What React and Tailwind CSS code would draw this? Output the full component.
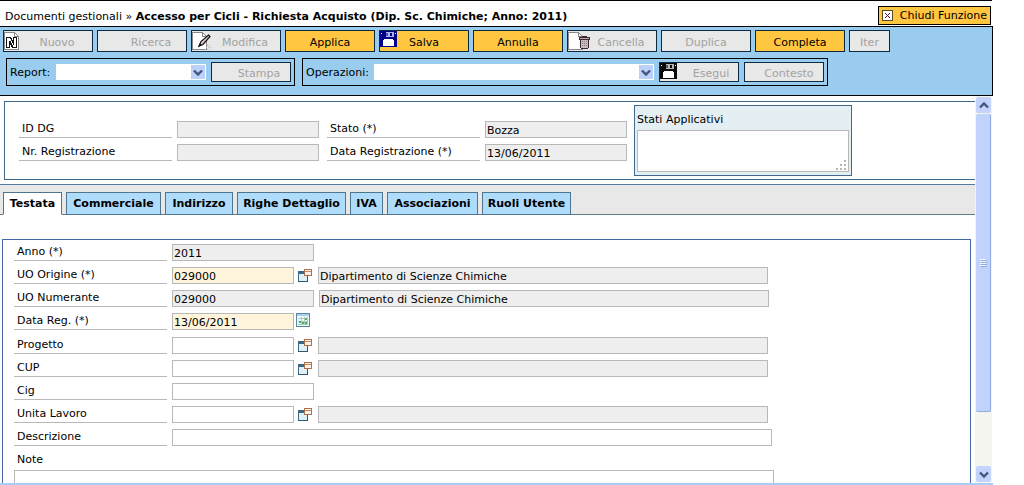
import React from "react";
import clsx from "clsx";

const PageIcon = ({ children }) => (
  <svg className="h-[20px] w-[23px]" viewBox="0 0 23 20" shapeRendering="crispEdges">
    <path d="M0.5 1.5h10l4 4v13h-14z" fill="#fff" stroke="#8a8a8a" />
    <path d="M10.5 1.5v4h4" fill="none" stroke="#8a8a8a" />
    {children}
  </svg>
);

const NewIcon = () => (
  <PageIcon>
    <path d="M2 6h5l2 4V6h4v11H8l-2-4v4H2z" fill="#111" />
    <path d="M3 7h3v1h1v2h1v2h1v2h1V7h2v9H9v-2H8v-2H7v-2H5v6H3z" fill="#fff" />
  </PageIcon>
);

const EditIcon = () => (
  <PageIcon>
    <g shapeRendering="auto">
      <path d="M7 15l2-4.500L16.500 4l1.500 1.500-7 8z" fill="#e0c8c8" stroke="#111" strokeWidth="1.200" />
      <path d="M6 16.500l2-4 2 1.500z" fill="#111" />
      <path d="M14 16.500h6M15 14.500h4M13 18.500h6" stroke="#bbb" strokeDasharray="1 1" />
    </g>
  </PageIcon>
);

const TrashIcon = () => (
  <PageIcon>
    <path d="M14.500 6.500v-1h4v1" fill="none" stroke="#3a2a30" />
    <path d="M11.500 6.500h10v2h-10z" fill="#c9a9b1" stroke="#3a2a30" />
    <path d="M12.500 8.500h8v8l-1 1h-6l-1-1z" fill="#c9bcc2" stroke="#3a2a30" />
    <path d="M14.500 10v6M16.500 10v6M18.500 10v6" stroke="#8b7a80" strokeDasharray="1 1" />
  </PageIcon>
);

const FloppyIcon = ({ body = "#00008b", light = "#a9b4ee" }) => (
  <svg className="h-[17px] w-[17px]" viewBox="0 0 17 17" shapeRendering="crispEdges">
    <path d="M0 0h16l1 1v15h-17z" fill={body} />
    <path d="M1 2h1v1h-1zM15 2h1v1h-1z" fill="#fff" />
    <path d="M6 1h8v5h-8z" fill={light} />
    <path d="M5 2h3v3h-3z" fill={body} opacity="0.5" />
    <path d="M10 2h2v3h-2z" fill={body} />
    <path d="M3 9h11v6h-11z" fill="#fff" />
    <path d="M4 8h9v1h-9z" fill="#fff" />
  </svg>
);

const BlackFloppyIcon = () => <FloppyIcon body="#0a0a0a" light="#b5b5b5" />;

const LookupIcon = () => (
  <svg className="h-[14px] w-[14px]" viewBox="0 0 14 14" shapeRendering="crispEdges">
    <path d="M0.500 2.500h9v10h-9z" fill="#dff0f7" stroke="#3c6884" />
    <path d="M0 2h10v3h-10z" fill="#3c6884" />
    <path d="M9 4h1v9h-1zM0 12h10v1h-10z" fill="#2f566f" />
    <path d="M6.500 0.500h7v6h-7z" fill="#fdf3ea" stroke="#b0714a" />
    <path d="M7 2h6v1h-6z" fill="#c98a5f" />
  </svg>
);

const CalendarIcon = () => (
  <svg className="h-[14px] w-[14px]" viewBox="0 0 14 14" shapeRendering="crispEdges">
    <path d="M0.500 0.500h13v13h-13z" fill="#eef7fb" stroke="#5b87a3" />
    <path d="M1 1h12v2h-12z" fill="#a9d0e6" />
    <path d="M2 5h10M2 8h10M2 11h10M5 4v8M8 4v8M11 4v8" stroke="#a5d0b4" strokeWidth="1" fill="none" />
    <path d="M9 5h2v2h-2zM3 8h2v2h-2zM6 9h2v2h-2zM9 9h2v2h-2z" fill="#5fa873" />
  </svg>
);

const Chevron = ({ up }) => (
  <svg className="h-[7px] w-[10px]" viewBox="0 0 10 7">
    <path d={up ? "M1 5.500l4-4 4 4" : "M1 1.500l4 4 4-4"} fill="none" stroke="#3f5680" strokeWidth="2.400" />
  </svg>
);

const ToolButton = ({ label, icon: Icon, enabled, small, className }) => (
  <button
    type="button"
    disabled={!enabled}
    className={clsx(
      "relative border border-[#0b2a40] pt-1 text-center",
      small ? "h-5 leading-[14px]" : "h-[22px] leading-[16px]",
      enabled ? "bg-[#ffc642] text-black" : "bg-[#e8e8e8] text-[#a2a2a2]",
      className
    )}
  >
    {Icon && (
      <span className="absolute top-0 left-0">
        <Icon />
      </span>
    )}
    {label}
  </button>
);

const ToolSelect = ({ id, label, className }) => (
  <>
    <label htmlFor={id} className="mr-1 pt-[2px]">
      {label}
    </label>
    <span className={clsx("relative mr-1 block h-4", className)}>
      <select id={id} className="block h-full w-full appearance-none bg-white" />
      <span className="pointer-events-none absolute top-px right-px flex h-[14px] w-[14px] items-center justify-center bg-[#bdd0f8]">
        <Chevron />
      </span>
    </span>
  </>
);

const TextBox = ({ kind, value, className, ...rest }) => (
  <input
    type="text"
    defaultValue={value}
    readOnly={kind === "readonly"}
    className={clsx(
      "block h-[17px] border border-[#b8b8b8] px-px pt-px outline-none",
      kind === "readonly" && "bg-[#eeeeee]",
      kind === "required" && "bg-[#fff5dc]",
      kind === "plain" && "bg-white",
      className || "w-[142px]"
    )}
    {...rest}
  />
);

const Field = ({ id, label, value = "", kind = "readonly", className }) => (
  <div className="flex">
    <label htmlFor={id} className="mr-[5px] h-[17px] w-[153px] border-b border-[#b8b8b8] pl-[3px] leading-[16px]">
      {label}
    </label>
    <TextBox id={id} value={value} kind={kind} className={className} />
  </div>
);

const tools = [
  { label: "Nuovo", icon: NewIcon, className: "w-[90px] pl-[18px]" },
  { label: "Ricerca", className: "w-[90px] pl-[18px]" },
  { label: "Modifica", icon: EditIcon, className: "w-[90px] pl-[18px]" },
  { label: "Applica", enabled: true, className: "w-[90px]" },
  { label: "Salva", icon: FloppyIcon, enabled: true, className: "w-[90px]" },
  { label: "Annulla", enabled: true, className: "w-[90px]" },
  { label: "Cancella", icon: TrashIcon, className: "w-[90px] pl-[18px]" },
  { label: "Duplica", className: "w-[90px]" },
  { label: "Completa", enabled: true, className: "w-[90px]" },
  { label: "Iter", className: "w-[41px]" },
];

const tabs = [
  { label: "Testata", className: "w-[59px]" },
  { label: "Commerciale", className: "w-[95px]" },
  { label: "Indirizzo", className: "w-[68px]" },
  { label: "Righe Dettaglio", className: "w-[109px]" },
  { label: "IVA", className: "w-[33px]" },
  { label: "Associazioni", className: "w-[91px]" },
  { label: "Ruoli Utente", className: "w-[89px]" },
];

const rows = [
  { id: "anno", label: "Anno (*)", value: "2011", kind: "readonly" },
  { id: "origine", label: "UO Origine (*)", value: "029000", kind: "required", lookup: true, detail: "Dipartimento di Scienze Chimiche" },
  { id: "numerante", label: "UO Numerante", value: "029000", kind: "readonly", detail: "Dipartimento di Scienze Chimiche" },
  { id: "datareg", label: "Data Reg. (*)", value: "13/06/2011", kind: "required", calendar: true },
  { id: "progetto", label: "Progetto", kind: "plain", lookup: true, detail: "" },
  { id: "cup", label: "CUP", kind: "plain", lookup: true, detail: "" },
  { id: "cig", label: "Cig", kind: "plain" },
  { id: "unita", label: "Unita Lavoro", kind: "plain", lookup: true, detail: "" },
  { id: "descrizione", label: "Descrizione", kind: "plain", className: "w-[600px]" },
];

const FormRow = ({ lookup, calendar, detail, className, ...field }) => (
  <div className="flex">
    <Field {...field} className={lookup || calendar ? "w-[122px]" : className} />
    {lookup && (
      <button type="button" aria-label={`Cerca ${field.label}`} className="mr-[6px] ml-1 h-[17px]">
        <LookupIcon />
      </button>
    )}
    {calendar && (
      <button type="button" aria-label="Calendario" className="ml-[2px] h-[18px] pb-1">
        <CalendarIcon />
      </button>
    )}
    {detail !== undefined && (
      <TextBox
        kind="readonly"
        value={detail}
        aria-label={`Dettaglio ${field.label}`}
        className={clsx("w-[450px]", !lookup && "ml-[5px]")}
      />
    )}
  </div>
);

const Header = () => (
  <header className="mr-px flex h-[26px] shrink-0 items-center justify-between border-t border-black pl-[5px]">
    <h1 className="pt-[6px] font-normal">
      Documenti gestionali » <b>Accesso per Cicli - Richiesta Acquisto (Dip. Sc. Chimiche; Anno: 2011)</b>
    </h1>
    <button
      type="button"
      className="mt-1 mr-px flex h-[19px] w-[113px] items-center justify-between border border-black bg-[#ffc642] px-[3px] whitespace-nowrap"
    >
      <svg className="h-[11px] w-[11px]" viewBox="0 0 11 11" shapeRendering="crispEdges">
        <path d="M0.500 0.500h10v10h-10z" fill="#fff" stroke="#5c4a20" />
        <path d="M3 3l5 5M8 3l-5 5" stroke="#5a1030" shapeRendering="auto" />
      </svg>
      Chiudi Funzione
    </button>
  </header>
);

const Toolbar = () => (
  <div className="h-[70px] shrink-0 border-y border-r border-black bg-[#99ccee] pt-[3px] pl-[3px]">
    <div className="flex gap-1">
      {tools.map((tool) => (
        <ToolButton key={tool.label} {...tool} />
      ))}
    </div>
    <div className="mt-[6px] ml-[3px] flex gap-[7px]">
      <div className="flex h-[28px] w-[289px] items-center justify-between border border-black px-[3px]">
        <ToolSelect id="report" label="Report:" className="w-[150px]" />
        <ToolButton label="Stampa" small className="w-20 pl-4" />
      </div>
      <div className="flex h-[28px] w-[526px] items-center justify-between border border-black px-[3px]">
        <ToolSelect id="operazioni" label="Operazioni:" className="w-[280px]" />
        <ToolButton label="Esegui" icon={BlackFloppyIcon} small className="mr-1 w-20 pl-6" />
        <ToolButton label="Contesto" small className="w-20 pl-[10px]" />
      </div>
    </div>
  </div>
);

const Summary = () => (
  <section className="mt-[5px] ml-1 flex h-[79px] shrink-0 border-y border-l border-[#3f6a8c] pl-[14px]">
    <div className="mt-[19px] mr-2 flex flex-col gap-[6px]">
      <Field id="iddg" label="ID DG" />
      <Field id="nrreg" label="Nr. Registrazione" />
    </div>
    <div className="mt-[19px] mr-[7px] flex flex-col gap-[6px]">
      <Field id="stato" label="Stato (*)" value="Bozza" />
      <Field id="dataregistrazione" label="Data Registrazione (*)" value="13/06/2011" />
    </div>
    <div className="mt-[3px] h-[71px] w-[218px] border border-[#3f6a8c] bg-[#e4eff3] px-[2px] pt-[6px]">
      <label htmlFor="stati" className="block h-[18px] leading-[16px]">
        Stati Applicativi
      </label>
      <span className="relative block">
        <textarea id="stati" className="block h-[42px] w-full resize-none border border-[#b8b8b8] bg-white outline-none" />
        <svg className="pointer-events-none absolute right-[3px] bottom-[2px] h-[10px] w-[10px]" viewBox="0 0 10 10" shapeRendering="crispEdges">
          <path d="M8 0h2v2h-2zM8 4h2v2h-2zM4 4h2v2h-2zM8 8h2v2h-2zM4 8h2v2h-2zM0 8h2v2h-2z" fill="#b5b5b5" />
        </svg>
      </span>
    </div>
  </section>
);

const TabBar = () => (
  <nav className="mt-1 flex h-[31px] shrink-0 items-end gap-1 border-t border-[#5577a0] bg-[#e8e8e8] pl-[3px] shadow-[inset_0_-1px_0_#5f7b90]">
    {tabs.map((tab, i) => (
      <button
        key={tab.label}
        type="button"
        className={clsx(
          "h-[23px] border border-[#4f758f] pt-px text-center font-bold whitespace-nowrap",
          i === 0 ? "border-b-white bg-white" : "bg-[#b0dcfc]",
          tab.className
        )}
      >
        {tab.label}
      </button>
    ))}
  </nav>
);

const Scrollbar = () => (
  <div className="flex w-[17px] flex-col bg-[#f5f5f0] p-px">
    <button type="button" aria-label="Su" className="flex h-4 items-center justify-center rounded-[2px] bg-[#c3d3fb]">
      <Chevron up />
    </button>
    <div className="mt-px flex h-[298px] items-center justify-center rounded-[2px] border-r border-b border-[#8fabdf] bg-[#c1d2fd]">
      <svg className="h-2 w-[7px]" viewBox="0 0 7 8" shapeRendering="crispEdges">
        <path d="M0 0h6v1h-6zM0 2h6v1h-6zM0 4h6v1h-6zM0 6h6v1h-6z" fill="#f2f6ff" />
        <path d="M1 1h6v1h-6zM1 3h6v1h-6zM1 5h6v1h-6zM1 7h6v1h-6z" fill="#8fabdf" />
      </svg>
    </div>
    <button type="button" aria-label="Giu" className="mt-auto flex h-4 items-center justify-center rounded-[2px] bg-[#c3d3fb]">
      <Chevron />
    </button>
  </div>
);

const App = () => (
  <div className="flex h-screen flex-col overflow-hidden bg-white pr-[31px] font-['DejaVu_Sans',Verdana,sans-serif] text-[11px] leading-[14px] text-black">
    <Header />
    <Toolbar />
    <div className="mr-px flex min-h-0 flex-1">
      <main className="flex min-w-0 flex-1 flex-col overflow-hidden">
        <Summary />
        <TabBar />
        <section className="mt-6 mr-1 ml-[2px] min-h-0 flex-1 border border-b-0 border-[#4468a8] pt-1 pl-[11px]">
          <div className="flex flex-col gap-[6px]">
            {rows.map((row) => (
              <FormRow key={row.id} {...row} />
            ))}
          </div>
          <label htmlFor="note" className="mt-[6px] block h-[18px] pl-[3px] leading-[16px]">
            Note
          </label>
          <textarea id="note" className="block h-16 w-[760px] resize-none border border-[#b8b8b8] outline-none" />
        </section>
      </main>
      <Scrollbar />
    </div>
    <div className="h-[2px] shrink-0 bg-[#a9cdf5]" />
  </div>
);

export default App;
